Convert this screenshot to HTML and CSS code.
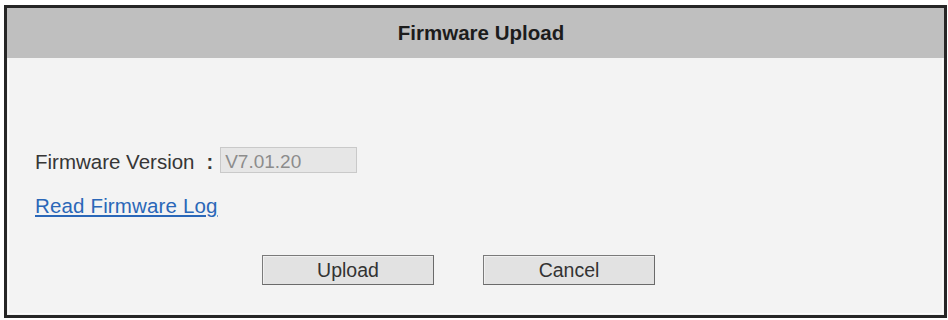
FILE: index.html
```html
<!DOCTYPE html>
<html>
<head>
<meta charset="utf-8">
<link rel="stylesheet" href="styles.css">
</head>
<body>
<div class="dialog">
  <div class="header">Firmware Upload</div>
  <div class="content">
    <div class="row">
      <span class="label">Firmware Version</span><span class="colon">:</span>
      <input class="field" type="text" value="V7.01.20" readonly>
    </div>
    <a class="link" href="#">Read Firmware Log</a>
    <div class="actions">
      <button class="btn" type="button">Upload</button>
      <button class="btn" type="button">Cancel</button>
    </div>
  </div>
</div>
</body>
</html>
```
FILE: styles.css
```css
html, body {
  margin: 0;
  padding: 0;
  background: #ffffff;
}
body {
  font-family: "Liberation Sans", Arial, sans-serif;
}
.dialog {
  margin: 5px 0 0 4px;
  width: 943px;
  height: 313px;
  box-sizing: border-box;
  border: 3px solid #262626;
  background: #f3f3f3;
  box-shadow: inset 0 0 0 1px #f3f3f3, inset 0 0 0 2px #fbfbfb;
}
.header {
  height: 50px;
  line-height: 50px;
  background: #bfbfbf;
  text-align: center;
  font-weight: bold;
  font-size: 20.5px;
  color: #1c1c1c;
  padding-left: 11px;
}
.content {
  padding: 0 0 0 28px;
}
.row {
  display: flex;
  align-items: baseline;
  margin-top: 89px;
  height: 26px;
}
.label {
  font-size: 20.5px;
  color: #363636;
  position: relative;
  top: 1px;
}
.colon {
  font-size: 20px;
  font-weight: bold;
  color: #363636;
  margin: 0 7px 0 12px;
  position: relative;
  top: 1px;
}
.field {
  box-sizing: border-box;
  width: 137px;
  height: 26px;
  margin: 0;
  padding: 4px 0 0 4px;
  border: 1px solid #c9c9c9;
  background: #e6e6e6;
  color: #8c8c8c;
  font-family: "Liberation Sans", Arial, sans-serif;
  font-size: 19px;
  outline: none;
}
.link {
  display: block;
  width: max-content;
  margin-top: 21px;
  font-size: 20.5px;
  letter-spacing: 0.15px;
  line-height: 24px;
  color: #2a67b8;
  text-decoration: underline;
}
.actions {
  display: flex;
  gap: 49px;
  margin-top: 37px;
  padding-left: 227px;
}
.btn {
  box-sizing: border-box;
  width: 172px;
  height: 30px;
  margin: 0;
  padding: 0;
  border: 1px solid #7a7a7a;
  border-bottom-color: #6a6a6a;
  border-right-color: #6a6a6a;
  background: #e2e2e2;
  box-shadow: inset 1px 1px 0 #f0f0f0;
  color: #333333;
  font-family: "Liberation Sans", Arial, sans-serif;
  font-size: 19.5px;
}
```
